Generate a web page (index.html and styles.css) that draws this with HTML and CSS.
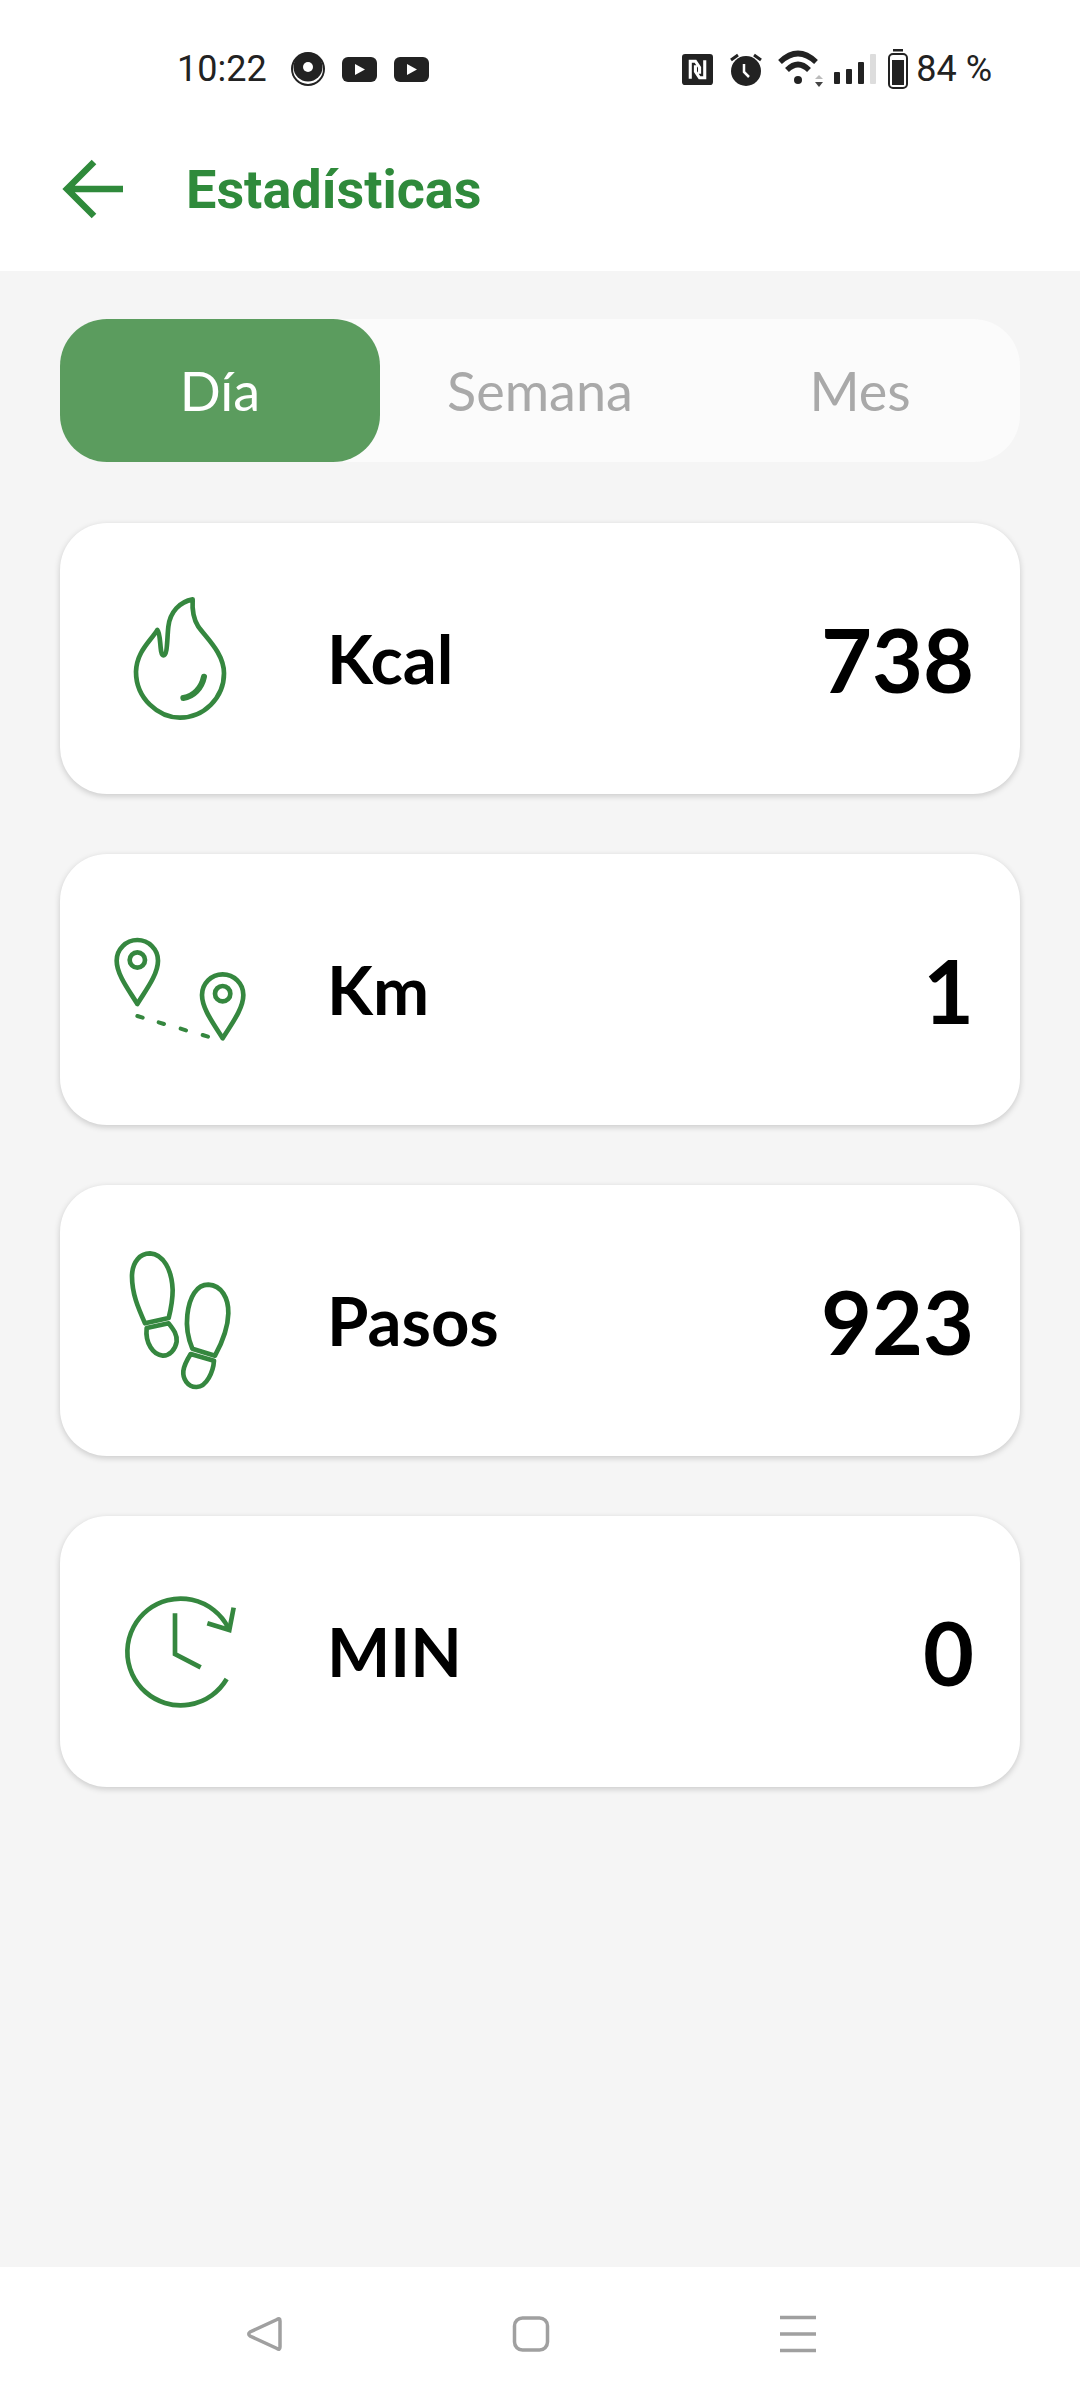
FILE: index.html
```html
<!DOCTYPE html>
<html lang="es">
<head>
<meta charset="utf-8">
<title>Estadísticas</title>
<link rel="stylesheet" href="styles.css">
</head>
<body>
<div class="screen">
  <header class="top">
    <div class="status">
      <div class="status-group">
        <span class="status-text time">10:22</span>
        <svg class="s-disc" width="34" height="34" viewBox="0 0 34 34"><circle cx="17" cy="17" r="17" fill="#222"/><circle cx="17" cy="17" r="15" fill="#fff"/><circle cx="17" cy="15" r="14.5" fill="#222"/><circle cx="17" cy="15" r="5" fill="#fff"/></svg>
        <svg class="s-yt" width="35" height="25" viewBox="0 0 35 25"><rect width="35" height="25" rx="6" fill="#222"/><path d="M13 7l10 5.500-10 5.500z" fill="#fff"/></svg>
        <svg class="s-yt" width="35" height="25" viewBox="0 0 35 25"><rect width="35" height="25" rx="6" fill="#222"/><path d="M13 7l10 5.500-10 5.500z" fill="#fff"/></svg>
      </div>
      <div class="status-group">
        <svg class="s-nfc" width="31" height="31" viewBox="0 0 30 30"><rect width="30" height="30" rx="3" fill="#222"/><path d="M8 24V7h5l4 6v6M22 6v17h-5l-4-6v-6" fill="none" stroke="#fff" stroke-width="3"/></svg>
        <svg class="s-alarm" width="34" height="34" viewBox="0 0 34 34"><circle cx="17" cy="19" r="15" fill="#222"/><path d="M2 8l7-5M32 8l-7-5" stroke="#222" stroke-width="3" fill="none"/><path d="M15 12v8l5 5" stroke="#fff" stroke-width="2.500" fill="none"/></svg>
        <svg class="s-wifi" width="46" height="38" viewBox="0 0 46 38"><path d="M2 12Q20-5 38 12" fill="none" stroke="#222" stroke-width="5.500"/><path d="M9 20Q20 9 31 20" fill="none" stroke="#222" stroke-width="5.500"/><circle cx="20" cy="30" r="4" fill="#222"/><path d="M37 29l4-4 4 4z" fill="#bbb"/><path d="M37 32h8l-4 5z" fill="#444"/></svg>
        <svg class="s-signal" width="42" height="30" viewBox="0 0 42 30"><rect x="0" y="18" width="6" height="12" rx="1" fill="#222"/><rect x="12" y="15" width="6" height="15" rx="1" fill="#222"/><rect x="24" y="8" width="6" height="22" rx="1" fill="#222"/><rect x="36" y="0" width="6" height="30" rx="1" fill="#ddd"/></svg>
        <svg class="s-batt" width="20" height="40" viewBox="0 0 20 40"><rect x="5" y="0" width="10" height="2.500" fill="#222"/><rect x="1" y="5" width="18" height="34" rx="4" fill="none" stroke="#222" stroke-width="2"/><rect x="4" y="11" width="12" height="25" fill="#222"/></svg>
        <span class="status-text batt-text">84 %</span>
      </div>
    </div>
    <div class="appbar">
      <svg class="back" width="64" height="64" viewBox="0 0 64 64"><path d="M62 32H6M33 5L6 32l27 27" fill="none" stroke="#2f8a3b" stroke-width="6.500"/></svg>
      <h1 class="title">Estadísticas</h1>
    </div>
  </header>

  <main class="content">
    <div class="tabs">
      <div class="tab tab-active">Día</div>
      <div class="tab">Semana</div>
      <div class="tab">Mes</div>
    </div>

    <section class="card">
      <svg class="icon" viewBox="0 -141 540 813"><path d="M308 88C270 95 240 125 235 170C231 205 233 256 220 256C208 256 214 192 202 180C180 215 140 245 138 305C138 385 205 443 270 443C340 443 402 385 402 310C402 250 350 205 325 170C312 150 306 120 308 88Z"/><path class="thick" d="M342 320C335 355 310 380 280 384"/></svg>
      <span class="label">Kcal</span>
      <span class="value">738</span>
    </section>

    <section class="card">
      <svg class="icon" viewBox="0 -198 540 813"><path d="M142 252C120 215 80 165 80 122A62 62 0 0 1 204 122C204 165 164 215 142 252Z"/><circle cx="142" cy="120" r="23"/><path d="M398 355C376 318 336 268 336 225A62 62 0 0 1 460 225C460 268 420 318 398 355Z"/><circle cx="398" cy="221" r="23"/><path class="dash" d="M142 288L158 293M206 307L222 312M272 326L288 331M338 345L354 350"/></svg>
      <span class="label">Km</span>
      <span class="value">1</span>
    </section>

    <section class="card">
      <svg class="icon" viewBox="-30 -165 540 813"><path d="M135 250C115 205 95 160 96 105C98 65 120 40 150 40C190 42 216 90 218 150C218 180 212 210 206 234Z"/><path d="M140 264L206 250C222 270 232 285 230 305C226 330 208 348 188 347C160 345 135 310 140 264Z"/><path d="M345 347L277 326C262 290 258 260 262 225C268 170 290 134 325 134C365 136 386 175 385 220C384 265 365 310 345 347Z"/><path d="M272 342L342 362C340 395 320 440 290 441C262 442 248 415 250 393C252 375 262 358 272 342Z"/></svg>
      <span class="label">Pasos</span>
      <span class="value">923</span>
    </section>

    <section class="card">
      <svg class="icon" viewBox="-30 -162 540 813"><path class="line" d="M384 172A160 160 0 1 0 380 327"/><path class="line" d="M401 113L388 180L322 160"/><path class="line" d="M225 130V252L302 292"/></svg>
      <span class="label">MIN</span>
      <span class="value">0</span>
    </section>
  </main>

  <nav class="navbar">
    <svg class="nav-icon" width="40" height="40" viewBox="0 0 40 40"><path d="M33 5.500Q36 3.500 36 7V33Q36 36.500 33 34.500L6 22Q3.500 20 6 18Z"/></svg>
    <svg class="nav-icon" width="40" height="40" viewBox="0 0 40 40"><rect x="3.500" y="4" width="33" height="32" rx="8"/></svg>
    <svg class="nav-icon" width="40" height="40" viewBox="0 0 40 40"><path d="M2 3.500H38M2 20H38M2 36.500H38"/></svg>
  </nav>
</div>
</body>
</html>
```

FILE: styles.css
```css
* { box-sizing: border-box; }
html, body { margin: 0; padding: 0; }
body { font-family: "Lato", sans-serif; background: #f5f5f5; }

.screen { width: 1080px; height: 2400px; display: flex; flex-direction: column; }

.top { background: #fff; height: 271px; flex: none; }

.status {
  height: 90px;
  padding: 48px 88px 0 177px;
  display: flex;
  justify-content: space-between;
  align-items: center;
}
.status-group { display: flex; align-items: center; height: 44px; }
.status-text { font-family: "Roboto", sans-serif; font-size: 36px; color: #222; line-height: 44px; }
.s-disc { margin-left: 24px; }
.s-yt { margin-left: 17px; }
.s-alarm { margin-left: 16px; }
.s-wifi { margin-left: 15px; }
.s-signal { margin-left: 10px; }
.s-batt { margin-left: 12px; }
.batt-text { margin-left: 8px; }

.appbar { height: 181px; display: flex; align-items: center; padding: 19px 0 0 61px; }
.back { flex: none; margin-top: -2px; }
.title {
  margin: 0 0 0 61px;
  font-family: "Roboto", sans-serif;
  font-weight: 700;
  font-size: 54px;
  color: #2f8a3b;
  line-height: 60px;
}

.content { flex: 1; padding: 48px 60px 0; display: flex; flex-direction: column; gap: 60px; }

.tabs {
  height: 143px;
  margin-bottom: 1px;
  display: grid;
  grid-template-columns: repeat(3, 1fr);
  background: #fbfbfb;
  border-radius: 47px;
}
.tab {
  display: flex;
  align-items: center;
  justify-content: center;
  font-size: 54px;
  color: #a9a9a9;
  border-radius: 47px;
}
.tab-active { background: #5b9c5e; color: #fff; }

.card {
  height: 271px;
  background: #fff;
  border-radius: 47px;
  box-shadow: 0 2px 6px rgba(0, 0, 0, .18);
  display: flex;
  align-items: center;
  padding: 0 46px 0 30px;
}
.icon { width: 180px; height: 271px; flex: none; margin-right: 57px; }
.icon path, .icon circle { fill: none; stroke: #35873f; stroke-width: 14; stroke-linejoin: round; }
.icon .thick { stroke-width: 18; stroke-linecap: round; }
.icon .dash { stroke-width: 12; stroke-linecap: round; }
.icon .line { stroke-linejoin: miter; }
.label { font-size: 67px; font-weight: 700; color: #000; margin-top: -2px; }
.value { margin-left: auto; font-size: 88px; font-weight: 700; color: #000; }

.navbar {
  height: 133px;
  flex: none;
  background: #fff;
  display: flex;
  align-items: center;
  gap: 227px;
  padding-left: 244px;
}
.nav-icon { fill: none; stroke: #a0a0a0; stroke-width: 3.500; }
```
